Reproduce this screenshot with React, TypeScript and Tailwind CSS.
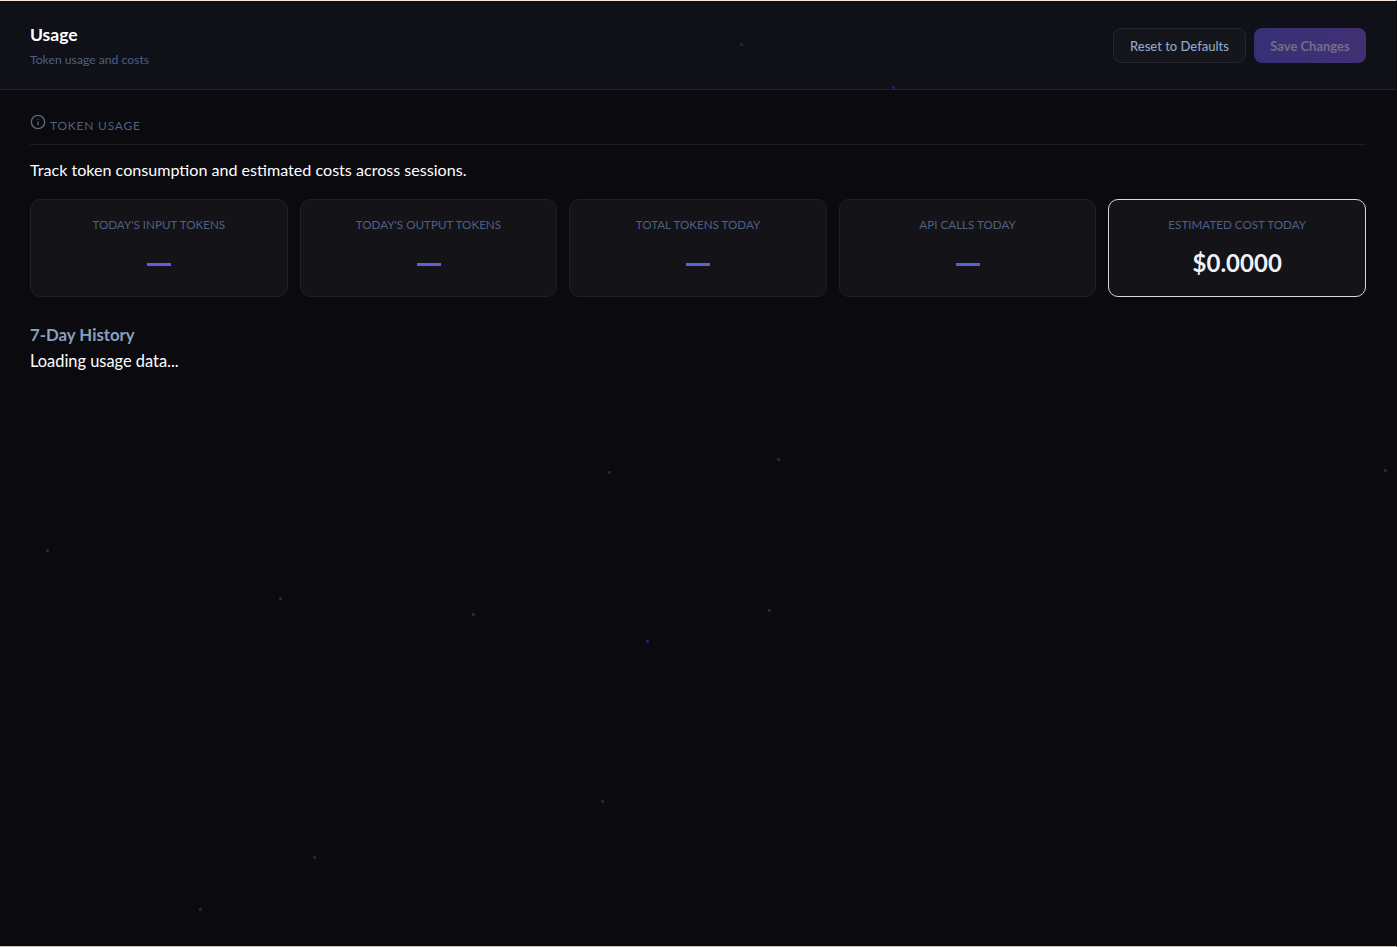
import { Info } from 'lucide-react'

const STATS = [
  { label: "TODAY'S INPUT TOKENS", value: null },
  { label: "TODAY'S OUTPUT TOKENS", value: null },
  { label: 'TOTAL TOKENS TODAY', value: null },
  { label: 'API CALLS TODAY', value: null },
  { label: 'ESTIMATED COST TODAY', value: '$0.0000' },
]

const STARS = [
  [741, 44],
  [893, 87],
  [609, 472],
  [778, 459],
  [1385, 470],
  [47, 550],
  [280, 598],
  [473, 614],
  [769, 610],
  [647, 641],
  [602, 801],
  [314, 857],
  [200, 909],
]

function StatCard({ label, value }: { label: string; value: string | null }) {
  return (
    <div
      className={
        'h-[98px] rounded-[10px] border bg-[#131318] pt-[16px] text-center ' +
        (value ? 'border-[#d8d8dc]' : 'border-[#1f1f25]')
      }
    >
      <div className="text-[11.65px] leading-[18px] text-[#4f6085]">{label}</div>
      {value ? (
        <div className="mt-[13px] text-[24px] leading-[32px] font-bold text-[#eef2f8]">{value}</div>
      ) : (
        <div className="mt-[14px] flex h-[32px] items-center justify-center">
          <div className="ml-px h-[3px] w-[24px] bg-[#5f5fdc]" />
        </div>
      )}
    </div>
  )
}

export default function App() {
  return (
    <div className="relative h-[947px] overflow-hidden border-y border-r border-t-[#f5e4e0] border-b-[#c8c8b4] border-r-[#0a0a0f] bg-[#0a0a0f] font-['Lato',sans-serif] text-white">
      <header className="flex h-[89px] items-center justify-between border-b border-[#22232a] bg-[#0f1018] px-[30px]">
        <div className="pt-[2px]">
          <h1 className="text-[17.5px] leading-[24px] font-bold text-white">Usage</h1>
          <p className="mt-[4px] text-[12.2px] leading-[18px] text-[#4f6085]">Token usage and costs</p>
        </div>
        <div className="flex gap-2">
          <button className="h-[35px] w-[133px] rounded-[8px] border border-[#26272d] bg-[#15161b] pt-1 text-[13px] font-medium text-[#8fa6c8]">
            Reset to Defaults
          </button>
          <button className="h-[35px] w-[112px] rounded-[8px] bg-gradient-to-r from-[#353074] to-[#432f75] pt-1 text-[13px] font-bold text-[#6f6f88]">
            Save Changes
          </button>
        </div>
      </header>

      <main className="px-[30px]">
        <div className="mt-[24px] flex h-[31px] items-start gap-[4px] border-b border-[#1c1d23]">
          <Info className="h-[16px] w-[16px] text-[#5c6a86]" strokeWidth={2} />
          <span className="pt-[3px] text-[12px] leading-[18px] tracking-[0.065em] text-[#4f6085]">TOKEN USAGE</span>
        </div>
        <p className="mt-[13px] text-[16.1px] leading-[24px] text-white">
          Track token consumption and estimated costs across sessions.
        </p>
        <div className="mt-[17px] grid grid-cols-5 gap-[12px]">
          {STATS.map((s) => (
            <StatCard key={s.label} label={s.label} value={s.value} />
          ))}
        </div>
        <h2 className="mt-[26px] text-[16.8px] leading-[24px] font-bold text-[#8c9fbd]">7-Day History</h2>
        <p className="mt-[2px] text-[16.4px] leading-[24px] text-white">Loading usage data...</p>
      </main>

      {STARS.map(([x, y]) => (
        <span
          key={x}
          className="absolute h-[3px] w-[3px] bg-[#22214f]"
          style={{ left: x - 1, top: y - 2 }}
        />
      ))}
    </div>
  )
}
